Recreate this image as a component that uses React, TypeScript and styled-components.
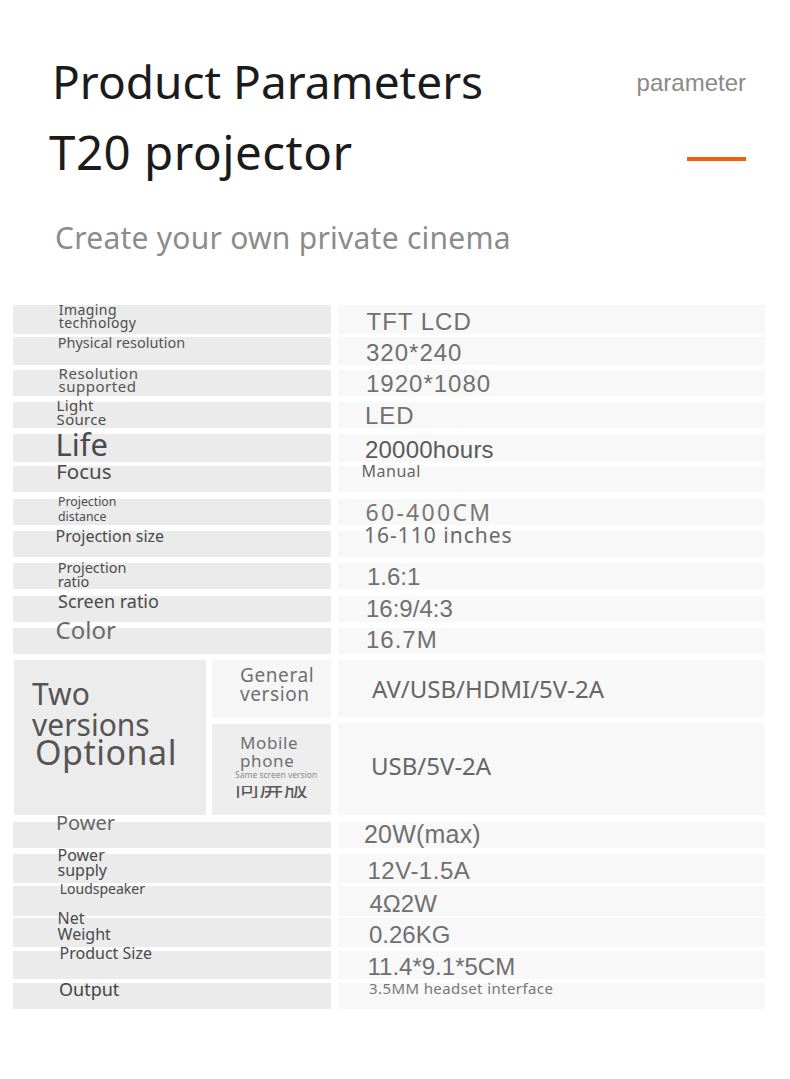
import React from 'react';
import styled, { createGlobalStyle } from 'styled-components';

const GlobalStyle = createGlobalStyle`
  html, body { margin: 0; padding: 0; background: #ffffff; }
  body { font-family: "Noto Sans", "Open Sans", sans-serif; }
  #root { width: 790px; min-height: 1079px; }
`;

const Page = styled.div`
  width: 790px;
  min-height: 1079px;
  box-sizing: border-box;
  padding-top: 58px;
  background: #ffffff;
`;

const Header = styled.header`
  display: flex;
  flex-direction: column;
  padding: 0 44px 0 49px;
`;

const HeadRow = styled.div<{ $mt?: number }>`
  display: flex;
  justify-content: space-between;
  align-items: flex-start;
  margin-top: ${p => p.$mt ?? 0}px;
`;

const Title = styled.h1<{ $size: number; $ls?: number; $ml?: number }>`
  margin: 0 0 0 ${p => p.$ml ?? 0}px;
  font-family: "Noto Sans", sans-serif;
  font-weight: 400;
  font-size: ${p => p.$size}px;
  line-height: ${p => p.$size}px;
  letter-spacing: ${p => p.$ls ?? 0}px;
  color: #1b1b1b;
  white-space: nowrap;
`;

const EnTag = styled.span`
  font-family: "Liberation Sans", Arial, sans-serif;
  font-size: 24px;
  line-height: 24px;
  color: #8a8a8a;
  margin-top: 12.7px;
`;

const Accent = styled.span`
  display: block;
  width: 59px;
  height: 4px;
  background: #f2600c;
  margin-top: 29.2px;
`;

const Tagline = styled.p`
  margin: 47.7px 0 0 6px;
  font-family: "Noto Sans", sans-serif;
  font-size: 30px;
  line-height: 30px;
  letter-spacing: 0.25px;
  color: #8c8c8c;
  white-space: nowrap;
`;

const Table = styled.section`
  display: flex;
  flex-direction: column;
  gap: 6.3px;
  margin-top: 52px;
  padding-left: 13px;
`;

const SpecRow = styled.div`
  display: grid;
  grid-template-columns: 318px 427px;
  column-gap: 7px;
  height: 26px;
`;

const LabelCell = styled.div`
  display: flex;
  flex-direction: column;
  align-items: flex-start;
  padding-left: 43px;
  background: #ebebeb;
`;

const ValueCell = styled.div<{ $h?: number; $grow?: boolean }>`
  display: flex;
  flex-direction: column;
  align-items: flex-start;
  padding-left: 26px;
  background: #f8f8f8;
  ${p => (p.$h ? `height: ${p.$h}px;` : '')}
  ${p => (p.$grow ? 'flex: 1;' : '')}
`;

const Label = styled.span<{ $size: number; $lh: number; $dy: number; $dx: number; $ls: number; $color: string }>`
  font-family: "Noto Sans", sans-serif;
  font-size: ${p => p.$size}px;
  line-height: ${p => p.$lh}px;
  letter-spacing: ${p => p.$ls}px;
  margin-top: ${p => p.$dy}px;
  margin-left: ${p => p.$dx}px;
  color: ${p => p.$color};
  white-space: nowrap;
`;

const Value = styled.span<{ $font: 'arial' | 'noto'; $size: number; $dy: number; $dx: number; $ls: number; $color: string }>`
  font-family: ${p => (p.$font === 'arial' ? '"Liberation Sans", Arial, sans-serif' : '"Noto Sans", sans-serif')};
  font-size: ${p => p.$size}px;
  line-height: ${p => p.$size}px;
  letter-spacing: ${p => p.$ls}px;
  margin-top: ${p => p.$dy}px;
  margin-left: ${p => p.$dx}px;
  color: ${p => p.$color};
  white-space: nowrap;
`;

const VersionRow = styled.div`
  display: grid;
  grid-template-columns: 318px 427px;
  column-gap: 7px;
  height: 155px;
`;

const VersionLeft = styled.div`
  display: grid;
  grid-template-columns: 192px 119px;
  column-gap: 6px;
  padding-left: 1px;
`;

const BigCell = styled.div`
  display: flex;
  flex-direction: column;
  align-items: flex-start;
  padding: 18px 0 0 18px;
  background: #ececec;
`;

const BigText = styled.span`
  font-family: "Noto Sans", sans-serif;
  font-size: 30px;
  line-height: 31px;
  color: #555555;
  white-space: nowrap;
`;

const BigEmphasis = styled.span`
  font-family: "Noto Sans", sans-serif;
  font-size: 34px;
  line-height: 34px;
  letter-spacing: 0.5px;
  margin: -5px 0 0 3px;
  color: #555555;
  white-space: nowrap;
`;

const SubColumn = styled.div`
  display: flex;
  flex-direction: column;
  gap: 6px;
`;

const SubCell = styled.div<{ $tone: string; $h?: number; $pt: number }>`
  display: flex;
  flex-direction: column;
  align-items: flex-start;
  padding: ${p => p.$pt}px 0 0 28px;
  background: ${p => p.$tone};
  ${p => (p.$h ? `height: ${p.$h}px; box-sizing: border-box;` : 'flex: 1;')}
`;

const SubText = styled.span<{ $size: number; $lh: number }>`
  font-family: "Noto Sans", sans-serif;
  font-size: ${p => p.$size}px;
  line-height: ${p => p.$lh}px;
  letter-spacing: 0.6px;
  color: #707070;
  white-space: nowrap;
`;

const TinyNote = styled.span`
  font-family: "Noto Sans", sans-serif;
  font-size: 8.5px;
  line-height: 9px;
  margin-left: -5px;
  color: #8a8a8a;
  white-space: nowrap;
`;

const ClippedCJK = styled.span`
  display: flex;
  align-items: flex-end;
  height: 12px;
  overflow: hidden;
  margin: 7px 0 0 -5px;
  font-family: "Noto Sans CJK SC", sans-serif;
  font-size: 24px;
  line-height: 24px;
  letter-spacing: 0.5px;
  color: #5a5a5a;
  white-space: nowrap;
`;

const VersionValues = styled.div`
  display: flex;
  flex-direction: column;
  gap: 6px;
`;

type LabelSpec = { lines: string[]; size: number; lh: number; dy: number; dx: number; ls?: number; color: string };
type ValueSpec = { text: string; font: 'arial' | 'noto'; size: number; dy: number; dx: number; ls: number; color: string };
type Spec = { label: LabelSpec; value: ValueSpec };

const A = '#707070';

const topRows: Spec[] = [
  {
    label: { lines: ['Imaging', 'technology'], size: 14, lh: 12.5, dy: -0.7, dx: 2.7, ls: 0.45, color: '#4d4d4d' },
    value: { text: 'TFT LCD', font: 'arial', size: 24, dy: 4.7, dx: 2.5, ls: 1, color: A },
  },
  {
    label: { lines: ['Physical resolution'], size: 14.5, lh: 14.5, dy: -1.9, dx: 1.7, color: '#555555' },
    value: { text: '320*240', font: 'arial', size: 24, dy: 3.4, dx: 2, ls: 1, color: A },
  },
  {
    label: { lines: ['Resolution', 'supported'], size: 15, lh: 13.5, dy: -2.6, dx: 2.6, ls: 0.5, color: '#555555' },
    value: { text: '1920*1080', font: 'arial', size: 24, dy: 2.7, dx: 2, ls: 1, color: A },
  },
  {
    label: { lines: ['Light', 'Source'], size: 15, lh: 14.5, dy: -4, dx: 0.6, ls: 0.3, color: '#4d4d4d' },
    value: { text: 'LED', font: 'arial', size: 24, dy: 1.7, dx: 1, ls: 1, color: A },
  },
  {
    label: { lines: ['Life'], size: 31, lh: 31, dy: -5.6, dx: -0.5, color: '#4a4a4a' },
    value: { text: '20000hours', font: 'arial', size: 24, dy: 3.4, dx: 1, ls: 0.2, color: '#5a5a5a' },
  },
  {
    label: { lines: ['Focus'], size: 20.5, lh: 20.5, dy: -5.4, dx: 0.2, color: '#4a4a4a' },
    value: { text: 'Manual', font: 'noto', size: 16, dy: -3.5, dx: -2.5, ls: 0.5, color: '#666666' },
  },
  {
    label: { lines: ['Projection', 'distance'], size: 12.3, lh: 14.5, dy: -3.4, dx: 2, color: '#4d4d4d' },
    value: { text: '60-400CM', font: 'noto', size: 23, dy: 2.3, dx: 1.5, ls: 2.3, color: '#777777' },
  },
  {
    label: { lines: ['Projection size'], size: 16, lh: 16, dy: -3.5, dx: -0.4, color: '#4a4a4a' },
    value: { text: '16-110 inches', font: 'noto', size: 21, dy: -6.4, dx: 0, ls: 1, color: '#6a6a6a' },
  },
  {
    label: { lines: ['Projection', 'ratio'], size: 14.5, lh: 13.7, dy: -2.5, dx: 1.7, color: '#4d4d4d' },
    value: { text: '1.6:1', font: 'arial', size: 24, dy: 1.7, dx: 3, ls: 0, color: A },
  },
  {
    label: { lines: ['Screen ratio'], size: 18, lh: 18, dy: -3.7, dx: 2, color: '#4a4a4a' },
    value: { text: '16:9/4:3', font: 'arial', size: 24, dy: 1.4, dx: 2, ls: 0, color: A },
  },
  {
    label: { lines: ['Color'], size: 24, lh: 24, dy: -10.3, dx: -0.4, color: '#6a6a6a' },
    value: { text: '16.7M', font: 'arial', size: 24, dy: 0, dx: 2, ls: 1, color: A },
  },
];

const bottomRows: Spec[] = [
  {
    label: { lines: ['Power'], size: 20, lh: 20, dy: -8.8, dx: 0, color: '#666666' },
    value: { text: '20W(max)', font: 'arial', size: 25, dy: 0.1, dx: 0, ls: 0.2, color: A },
  },
  {
    label: { lines: ['Power', 'supply'], size: 16, lh: 15, dy: -5.7, dx: 1.5, color: '#4a4a4a' },
    value: { text: '12V-1.5A', font: 'arial', size: 24, dy: 5.4, dx: 3.5, ls: 0.5, color: A },
  },
  {
    label: { lines: ['Loudspeaker'], size: 14, lh: 14, dy: -4, dx: 3.7, color: '#4a4a4a' },
    value: { text: '4Ω2W', font: 'arial', size: 24, dy: 5.7, dx: 5.5, ls: 0, color: A },
  },
  {
    label: { lines: ['Net', 'Weight'], size: 16, lh: 15.5, dy: -7, dx: 1.6, color: '#4a4a4a' },
    value: { text: '0.26KG', font: 'arial', size: 24, dy: 4.4, dx: 5, ls: 0, color: A },
  },
  {
    label: { lines: ['Product Size'], size: 16, lh: 16, dy: -6, dx: 3.5, color: '#4a4a4a' },
    value: { text: '11.4*9.1*5CM', font: 'arial', size: 24, dy: 4, dx: 3.5, ls: 0, color: A },
  },
  {
    label: { lines: ['Output'], size: 18, lh: 18, dy: -3.3, dx: 3, color: '#444444' },
    value: { text: '3.5MM headset interface', font: 'noto', size: 15, dy: -2.3, dx: 5, ls: 0.4, color: '#777777' },
  },
];

const Lines: React.FC<{ lines: string[] }> = ({ lines }) => (
  <>
    {lines.map((l, i) => (
      <React.Fragment key={l}>
        {i > 0 && <br />}
        {l}
      </React.Fragment>
    ))}
  </>
);

const SpecLine: React.FC<{ spec: Spec }> = ({ spec }) => {
  const { label: l, value: v } = spec;
  return (
    <SpecRow>
      <LabelCell>
        <Label $size={l.size} $lh={l.lh} $dy={l.dy} $dx={l.dx} $ls={l.ls ?? 0} $color={l.color}>
          <Lines lines={l.lines} />
        </Label>
      </LabelCell>
      <ValueCell>
        <Value $font={v.font} $size={v.size} $dy={v.dy} $dx={v.dx} $ls={v.ls} $color={v.color}>
          {v.text}
        </Value>
      </ValueCell>
    </SpecRow>
  );
};

export default function App() {
  return (
    <>
      <GlobalStyle />
      <Page>
        <Header>
          <HeadRow>
            <Title $size={46} $ml={3}>Product Parameters</Title>
            <EnTag>parameter</EnTag>
          </HeadRow>
          <HeadRow $mt={23.8}>
            <Title $size={47.5} $ls={0.5}>T20 projector</Title>
            <Accent />
          </HeadRow>
          <Tagline>Create your own private cinema</Tagline>
        </Header>

        <Table>
          {topRows.map(s => (
            <SpecLine key={s.label.lines.join(' ')} spec={s} />
          ))}

          <VersionRow>
            <VersionLeft>
              <BigCell>
                <BigText>
                  Two
                  <br />
                  versions
                </BigText>
                <BigEmphasis>Optional</BigEmphasis>
              </BigCell>
              <SubColumn>
                <SubCell $tone="#f6f6f6" $h={58} $pt={6}>
                  <SubText $size={19} $lh={19}>
                    General
                    <br />
                    version
                  </SubText>
                </SubCell>
                <SubCell $tone="#eeeeee" $pt={9.7}>
                  <SubText $size={17} $lh={18}>
                    Mobile
                    <br />
                    phone
                  </SubText>
                  <TinyNote>Same screen version</TinyNote>
                  <ClippedCJK>同屏版</ClippedCJK>
                </SubCell>
              </SubColumn>
            </VersionLeft>
            <VersionValues>
              <ValueCell $h={57}>
                <Value $font="noto" $size={24} $dy={16.4} $dx={8} $ls={0} $color="#666666">
                  AV/USB/HDMI/5V-2A
                </Value>
              </ValueCell>
              <ValueCell $grow>
                <Value $font="noto" $size={24} $dy={30.7} $dx={7} $ls={0} $color="#666666">
                  USB/5V-2A
                </Value>
              </ValueCell>
            </VersionValues>
          </VersionRow>

          {bottomRows.map(s => (
            <SpecLine key={s.label.lines.join(' ')} spec={s} />
          ))}
        </Table>
      </Page>
    </>
  );
}
